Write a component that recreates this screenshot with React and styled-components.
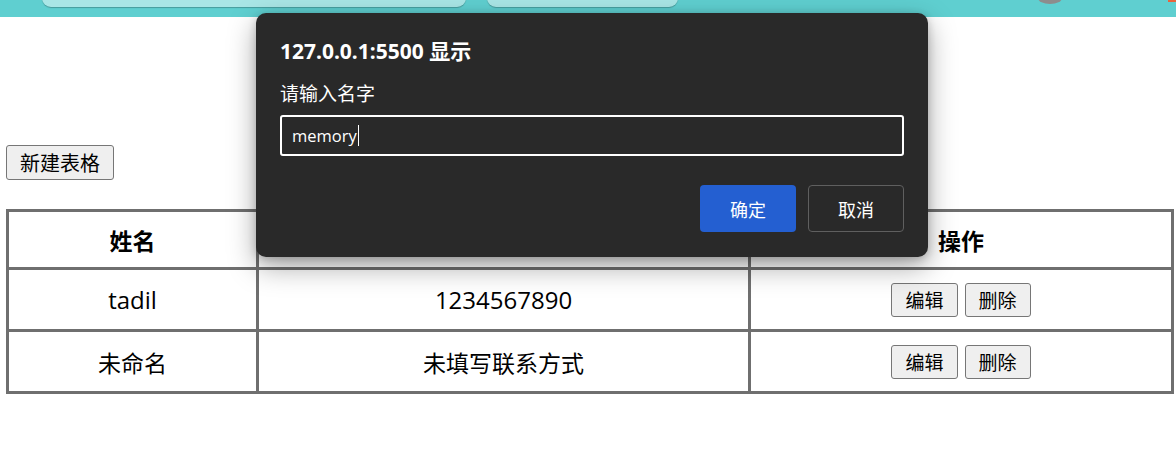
import React from 'react'
import styled, { createGlobalStyle } from 'styled-components'

const GlobalStyle = createGlobalStyle`
  html, body {
    margin: 0;
    padding: 0;
    background: #ffffff;
    font-family: "Noto Sans", "Noto Sans CJK SC", sans-serif;
    overflow: hidden;
  }
`;

const Shell = styled.div`
  position: relative;
  width: 1176px;
  height: 471px;
  overflow: hidden;
`;

const TabStrip = styled.div`
  height: 17px;
  background: #5fcfd0;
  display: flex;
  align-items: flex-start;
  padding-left: 42px;
  gap: 21px;
  position: relative;
`;

const Tab = styled.div`
  width: ${p => p.w}px;
  height: 9px;
  margin-top: -2px;
  background: #a9e6e6;
  border-radius: 0 0 14px 14px;
  box-shadow: 0 1px 1px rgba(0, 0, 0, 0.25);
`;

const Avatar = styled.div`
  position: absolute;
  left: 1038px;
  top: -8px;
  width: 24px;
  height: 12px;
  border-radius: 50%;
  background: #8d8d8d;
`;

const Flag = styled.div`
  position: absolute;
  left: 1168px;
  top: 0;
  width: 8px;
  height: 2px;
  background: #e8643c;
`;

const Page = styled.div`
  padding: 128px 2px 0 6px;
  display: flex;
  flex-direction: column;
  align-items: flex-start;
`;

const PlainButton = styled.button`
  font-family: "Noto Sans CJK SC", sans-serif;
  font-size: ${p => p.big ? 20 : 19}px;
  line-height: 1;
  color: #000;
  background: #efefef;
  border: 1px solid #767676;
  border-radius: 3px;
  padding: 0 ${p => p.big ? 13 : 13}px;
  height: ${p => p.big ? 35 : 34}px;
  cursor: pointer;
`;

const Table = styled.table`
  margin-top: 29px;
  width: 1168px;
  border-collapse: collapse;
  border: 3px solid #6f6f6f;
  font-family: "Noto Sans", "Noto Sans CJK SC", sans-serif;
  color: #000;
`;

const Th = styled.th`
  border: 3px solid #6f6f6f;
  height: 55px;
  padding: 0;
  font-weight: 700;
  font-size: 23px;
  font-family: "Noto Sans CJK SC", sans-serif;
  text-align: center;
  width: ${p => p.w}px;
`;

const Td = styled.td`
  border: 3px solid #6f6f6f;
  height: 59px;
  padding: 0;
  text-align: center;
  font-size: ${p => p.cjk ? 23 : 24}px;
  font-family: ${p => p.cjk ? '"Noto Sans CJK SC"' : '"Open Sans", "Noto Sans CJK SC"'}, sans-serif;
`;

const Actions = styled.div`
  display: flex;
  justify-content: center;
  gap: 7px;
`;

const Dialog = styled.div`
  position: absolute;
  left: 256px;
  top: 13px;
  width: 672px;
  height: 244px;
  box-sizing: border-box;
  background: #292929;
  border-radius: 10px;
  box-shadow: 0 10px 28px rgba(0, 0, 0, 0.35), 0 2px 8px rgba(0, 0, 0, 0.2);
  padding: 25px 24px 24px 24px;
  display: flex;
  flex-direction: column;
  color: #ffffff;
  font-family: "Noto Sans", "Noto Sans CJK SC", sans-serif;
`;

const DialogTitle = styled.div`
  font-size: 21px;
  font-weight: 700;
  line-height: 26px;
`;

const DialogLabel = styled.div`
  font-size: 19px;
  line-height: 26px;
  margin-top: 16px;
  font-family: "Noto Sans CJK SC", sans-serif;
`;

const Input = styled.div`
  margin-top: 9px;
  height: 41px;
  box-sizing: border-box;
  border: 2px solid #ffffff;
  border-radius: 3px;
  display: flex;
  align-items: center;
  padding-left: 10px;
  font-size: 16.5px;
  font-family: "Open Sans", sans-serif;
`;

const Caret = styled.span`
  display: inline-block;
  width: 1px;
  height: 21px;
  background: #ffffff;
  margin-left: 1px;
`;

const DialogFooter = styled.div`
  margin-top: 29px;
  display: flex;
  justify-content: flex-end;
  gap: 12px;
`;

const DialogButton = styled.button`
  width: 96px;
  height: 47px;
  box-sizing: border-box;
  border-radius: 4px;
  font-size: 18px;
  font-family: "Noto Sans CJK SC", sans-serif;
  color: #ffffff;
  background: ${p => p.primary ? '#245fd1' : '#292929'};
  border: ${p => p.primary ? 'none' : '1px solid #5f5f5f'};
  cursor: pointer;
`;

const rows = [
  { name: 'tadil', contact: '1234567890', cjk: false },
  { name: '未命名', contact: '未填写联系方式', cjk: true },
];

export default function App() {
  return (
    <Shell>
      <GlobalStyle />
      <TabStrip>
        <Tab w={424} />
        <Tab w={191} />
        <Avatar />
        <Flag />
      </TabStrip>
      <Page>
        <PlainButton big>新建表格</PlainButton>
        <Table>
          <thead>
            <tr>
              <Th w={247}>姓名</Th>
              <Th w={489}>联系方式</Th>
              <Th>操作</Th>
            </tr>
          </thead>
          <tbody>
            {rows.map((r, i) => (
              <tr key={i}>
                <Td cjk={r.cjk}>{r.name}</Td>
                <Td cjk={r.cjk}>{r.contact}</Td>
                <Td>
                  <Actions>
                    <PlainButton>编辑</PlainButton>
                    <PlainButton>删除</PlainButton>
                  </Actions>
                </Td>
              </tr>
            ))}
          </tbody>
        </Table>
      </Page>
      <Dialog>
        <DialogTitle>127.0.0.1:5500 显示</DialogTitle>
        <DialogLabel>请输入名字</DialogLabel>
        <Input>memory<Caret /></Input>
        <DialogFooter>
          <DialogButton primary>确定</DialogButton>
          <DialogButton>取消</DialogButton>
        </DialogFooter>
      </Dialog>
    </Shell>
  )
}
